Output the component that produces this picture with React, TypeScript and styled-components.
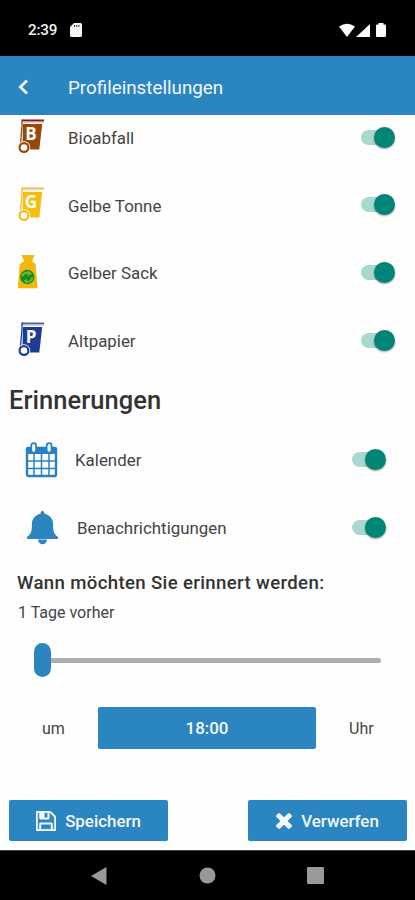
import React, { useState } from 'react';
import styled, { createGlobalStyle } from 'styled-components';

const BLUE = '#2b85c1';

const GlobalStyle = createGlobalStyle`
  *, *::before, *::after { box-sizing: border-box; }
  body { margin: 0; background: #fff; }
  button { font: inherit; border: 0; padding: 0; background: none; }
  svg { display: block; flex: none; }
`;

const Screen = styled.div`
  width: 415px;
  height: 900px;
  display: flex;
  flex-direction: column;
  overflow: hidden;
  background: #fefefe;
  color: #444;
  font-family: Roboto, sans-serif;
`;

const StatusBar = styled.div`
  flex: none;
  height: 56px;
  padding: 4px 28px 0;
  display: flex;
  align-items: center;
  background: #000;
  color: #f2f2f2;
`;

const Clock = styled.span`
  font-size: 15.2px;
  font-weight: 500;
  letter-spacing: -0.2px;
  width: 42px;
`;

const StatusIcons = styled.div`
  margin-left: auto;
  display: flex;
`;

const Header = styled.header`
  flex: none;
  height: 59px;
  padding: 2px 0 0 18px;
  display: flex;
  align-items: center;
  background: ${BLUE};
  color: #f1f7fc;
`;

const BackButton = styled.button`
  width: 50px;
  color: inherit;
`;

const Title = styled.h1`
  margin: 0;
  padding-top: 2px;
  font-size: 18.8px;
  font-weight: 400;
  letter-spacing: 0;
`;

const Content = styled.main`
  flex: 1;
  min-height: 0;
  overflow: hidden;
  display: flex;
  flex-direction: column;
`;

const WasteList = styled.div`
  flex: none;
  height: 259px;
  display: grid;
  grid-template-rows: repeat(4, 67.7px);
  align-content: end;
  padding: 0 20px 0 18px;
`;

const WasteRow = styled.div`
  display: flex;
  align-items: center;
`;

const WasteIcon = styled.div`
  width: 50px;
  flex: none;
`;

const Label = styled.span`
  font-size: 16.9px;
  line-height: 24px;
  white-space: nowrap;
  padding-top: 2px;
`;

const SwitchTrack = styled.button<{ $on: boolean }>`
  flex: none;
  margin-left: auto;
  width: 34px;
  height: 21px;
  display: flex;
  align-items: center;
  justify-content: ${(p) => (p.$on ? 'flex-end' : 'flex-start')};
  position: relative;
  &::before {
    content: '';
    position: absolute;
    left: 0;
    top: 3px;
    width: 32px;
    height: 15px;
    border-radius: 8px;
    background: ${(p) => (p.$on ? '#a9d8cf' : '#c4c4c4')};
  }
`;

const Thumb = styled.span`
  position: relative;
  width: 21px;
  height: 21px;
  border-radius: 50%;
  background: #008577;
  box-shadow: 0 1px 2px rgba(0, 0, 0, 0.38);
`;

const SectionTitle = styled.h2`
  flex: none;
  margin: 10px 0 0 9px;
  font-size: 25.5px;
  line-height: 32px;
  font-weight: 500;
  letter-spacing: 0.05px;
  color: #333;
`;

const ReminderList = styled.div`
  flex: none;
  margin-top: 10px;
  display: grid;
  grid-template-rows: repeat(2, 67.7px);
  padding: 0 29px 0 25px;
  ${Label} { padding-top: 0; }
`;

const ReminderRow = styled.div<{ $gap: number }>`
  display: flex;
  align-items: center;
  gap: ${(p) => p.$gap}px;
`;

const Question = styled.h3`
  flex: none;
  margin: 10px 0 0 17px;
  font-size: 18.6px;
  line-height: 24px;
  font-weight: 500;
  letter-spacing: 0.36px;
  color: #333;
  white-space: nowrap;
`;

const LeadTime = styled.div`
  flex: none;
  margin: 6px 0 0 18px;
  font-size: 16px;
  line-height: 24px;
`;

const Slider = styled.div`
  flex: none;
  margin: 18px 34px 0;
  height: 34px;
  display: flex;
  align-items: center;
`;

const SliderHandle = styled.span`
  width: 17px;
  height: 34px;
  border-radius: 9px;
  background: ${BLUE};
`;

const SliderLine = styled.span`
  flex: 1;
  height: 5px;
  border-radius: 0 3px 3px 0;
  background: #adadad;
`;

const TimeRow = styled.div`
  flex: none;
  margin-top: 30px;
  display: grid;
  grid-template-columns: 98px 218px 1fr;
  align-items: center;
`;

const TimeWord = styled.span<{ $inset: number }>`
  padding-left: ${(p) => p.$inset}px;
  font-size: 16px;
`;

const SolidButton = styled.button`
  height: 42px;
  display: flex;
  align-items: center;
  justify-content: center;
  gap: 9px;
  border-radius: 2px;
  background: ${BLUE};
  color: #f4f9fd;
  font-size: 16.9px;
  font-weight: 500;
`;

const Actions = styled.div`
  flex: none;
  margin: auto 8px 9px 9px;
  display: flex;
  justify-content: space-between;
  ${SolidButton} {
    width: 159px;
    height: 41px;
    padding-top: 1px;
  }
`;

const NavBar = styled.nav`
  flex: none;
  height: 50px;
  border-top: 1px solid #444;
  padding: 0 91px;
  display: flex;
  align-items: center;
  justify-content: space-between;
  background: #000;
`;

type BinProps = { letter: string; body: string; lid: string };

const Bin = ({ letter, body, lid }: BinProps) => (
  <svg width="27" height="36" viewBox="0 0 27 36">
    <path d="M4 0.500h22v1.600H4z" fill={lid} />
    <path d="M4 2.100h22v1.400H4z" fill={lid} opacity="0.45" />
    <path d="M4 .5v7L2.500 24" fill="none" stroke={body} strokeWidth="1.300" />
    <path d="M5 5h19.200L21.300 30.500H8L4.500 24z" fill={body} />
    <circle cx="6" cy="28.500" r="6.300" fill="#fff" />
    <circle cx="6" cy="28.500" r="4.400" fill="#fff" stroke={body} strokeWidth="2.200" />
    <text x="13" y="21.300" textAnchor="middle" fontFamily="Open Sans, sans-serif" fontSize="17" fontWeight="700" fill="#fff">{letter}</text>
  </svg>
);

const Sack = () => (
  <svg width="22" height="36" viewBox="0 0 22 36">
    <path d="M3.500 1h13l-2.300 6.200L17.500 10l2 24.300H-.3L1.700 10l4.400-2.800z" fill="#f5b70b" />
    <circle cx="9.300" cy="23" r="7.200" fill="#168b24" />
    <g fill="none" stroke="#72b92b" strokeWidth="2">
      <path d="M4.200 22.500c1-3.700 4-4.200 7.600-3.300M14.400 23c-.4 4-3.200 5.200-6.500 4.500" />
    </g>
    <path d="M10 16.500l4.400 3.300-5 2.200zM9 25v4.600l-3.600-3.100z" fill="#72b92b" />
  </svg>
);

const CalendarIcon = () => (
  <svg width="33" height="36" viewBox="0 0 33 36">
    <rect x="2" y="6" width="29" height="28" rx="1.6" fill="#fff" stroke="#2582c0" strokeWidth="2.4" />
    <path d="M1 12V7q0-2 2-2h27q2 0 2 2v5z" fill="#2582c0" />
    <path d="M2 19h29M2 26.500h29M9 11v23M16.500 11v23M24 11v23" stroke="#2582c0" strokeWidth="1.5" />
    <rect x="6.300" y="1.200" width="4.800" height="9.500" rx="2.400" fill="#fff" stroke="#2582c0" strokeWidth="1.700" />
    <rect x="21.700" y="1.200" width="4.800" height="9.500" rx="2.400" fill="#fff" stroke="#2582c0" strokeWidth="1.700" />
  </svg>
);

const BellIcon = () => (
  <svg width="34" height="36" viewBox="0 0 34 36">
    <path d="M17.500 1c1.200 0 1.900.8 1.900 2v.8c5.600 1.200 8.700 5.100 8.700 10.700 0 7.200.8 9.400 4.600 12.200.9.700.6 2.300-.7 2.300H3c-1.300 0-1.600-1.600-.7-2.300 3.800-2.800 4.600-5 4.600-12.200 0-5.600 3.100-9.500 8.700-10.700V3c0-1.200.7-2 1.900-2z" fill={BLUE} />
    <path d="M13 29.500h9c-.4 3.100-2 4.800-4.500 4.800S13.400 32.600 13 29.500z" fill={BLUE} />
  </svg>
);

const SaveIcon = () => (
  <svg width="20" height="20" viewBox="128 128 1536 1536" fill="currentColor" stroke="currentColor" strokeWidth="30">
    <path d="M512 1536h768v-384h-768v384zm896 0h128v-896q0-14-10-38.500t-20-34.500l-281-281q-10-10-34-20t-39-10v416q0 40-28 68t-68 28h-576q-40 0-68-28t-28-68v-416h-128v1280h128v-416q0-40 28-68t68-28h832q40 0 68 28t28 68v416zm-384-928v-320q0-13-9.500-22.500t-22.500-9.500h-192q-13 0-22.500 9.500t-9.500 22.500v320q0 13 9.500 22.500t22.500 9.500h192q13 0 22.500-9.500t9.500-22.500zm640 32v928q0 40-28 68t-68 28h-1344q-40 0-68-28t-28-68v-1344q0-40 28-68t68-28h928q40 0 88 20t76 48l280 280q28 28 48 76t20 88z" />
  </svg>
);

const DiscardIcon = () => (
  <svg width="16" height="16" viewBox="110 366 1188 1188" fill="currentColor">
    <path d="M1298 1322q0 40-28 68l-136 136q-28 28-68 28t-68-28l-294-294-294 294q-28 28-68 28t-68-28l-136-136q-28-28-28-68t28-68l294-294-294-294q-28-28-28-68t28-68l136-136q28-28 68-28t68 28l294 294 294-294q28-28 68-28t68 28l136 136q28 28 28 68t-28 68l-294 294 294 294q28 28 28 68z" />
  </svg>
);

const Switch = ({ label }: { label: string }) => {
  const [on, setOn] = useState(true);
  return (
    <SwitchTrack $on={on} role="switch" aria-checked={on} aria-label={label} onClick={() => setOn(!on)}>
      <Thumb />
    </SwitchTrack>
  );
};

const wasteTypes = [
  { name: 'Bioabfall', icon: <Bin letter="B" body="#974909" lid="#8d1519" /> },
  { name: 'Gelbe Tonne', icon: <Bin letter="G" body="#f4bd12" lid="#f0bd4a" /> },
  { name: 'Gelber Sack', icon: <Sack /> },
  { name: 'Altpapier', icon: <Bin letter="P" body="#1b3c91" lid="#5a6597" /> },
];

export default function App() {
  return (
    <Screen>
      <GlobalStyle />
      <StatusBar>
        <Clock>2:39</Clock>
        <svg width="12" height="14" viewBox="0 0 12 14">
          <path d="M4 0h6.500Q12 0 12 1.500v11q0 1.500-1.500 1.500h-9Q0 14 0 12.500V4z" fill="#f4f4f4" />
          <path d="M4.500 2v2M6.700 2v2M8.900 2v2" stroke="#333" strokeWidth="1" />
        </svg>
        <StatusIcons>
          <svg width="48" height="15" viewBox="0 0 48 15" fill="#fff">
            <path d="M0 3.500Q8 -2 16 3.500L8 14z" />
            <path d="M31 1v13H17z" />
            <path d="M39.500 0h5v1.500H46q1 0 1 1V13q0 1-1 1h-8q-1 0-1-1V2.500q0-1 1-1h1.500z" />
          </svg>
        </StatusIcons>
      </StatusBar>
      <Header>
        <BackButton aria-label="Zurück">
          <svg width="11" height="16" viewBox="0 0 11 16" fill="none" stroke="currentColor" strokeWidth="2.700">
            <path d="M9 1.500 2.300 8 9 14.500" />
          </svg>
        </BackButton>
        <Title>Profileinstellungen</Title>
      </Header>
      <Content>
        <WasteList>
          {wasteTypes.map((w) => (
            <WasteRow key={w.name}>
              <WasteIcon>{w.icon}</WasteIcon>
              <Label>{w.name}</Label>
              <Switch label={w.name} />
            </WasteRow>
          ))}
        </WasteList>
        <SectionTitle>Erinnerungen</SectionTitle>
        <ReminderList>
          <ReminderRow $gap={17}>
            <CalendarIcon />
            <Label>Kalender</Label>
            <Switch label="Kalender" />
          </ReminderRow>
          <ReminderRow $gap={18}>
            <BellIcon />
            <Label>Benachrichtigungen</Label>
            <Switch label="Benachrichtigungen" />
          </ReminderRow>
        </ReminderList>
        <Question>Wann möchten Sie erinnert werden:</Question>
        <LeadTime>1 Tage vorher</LeadTime>
        <Slider>
          <SliderHandle />
          <SliderLine />
        </Slider>
        <TimeRow>
          <TimeWord $inset={42}>um</TimeWord>
          <SolidButton>18:00</SolidButton>
          <TimeWord $inset={33}>Uhr</TimeWord>
        </TimeRow>
        <Actions>
          <SolidButton><SaveIcon />Speichern</SolidButton>
          <SolidButton><DiscardIcon />Verwerfen</SolidButton>
        </Actions>
      </Content>
      <NavBar>
        <svg width="16" height="18" viewBox="0 0 16 18"><path d="M15.500 0v18L0 9z" fill="#999" /></svg>
        <svg width="17" height="17" viewBox="0 0 17 17"><circle cx="8.500" cy="8.500" r="8" fill="#999" /></svg>
        <svg width="17" height="17" viewBox="0 0 17 17"><rect width="17" height="17" rx="1" fill="#999" /></svg>
      </NavBar>
    </Screen>
  );
}
